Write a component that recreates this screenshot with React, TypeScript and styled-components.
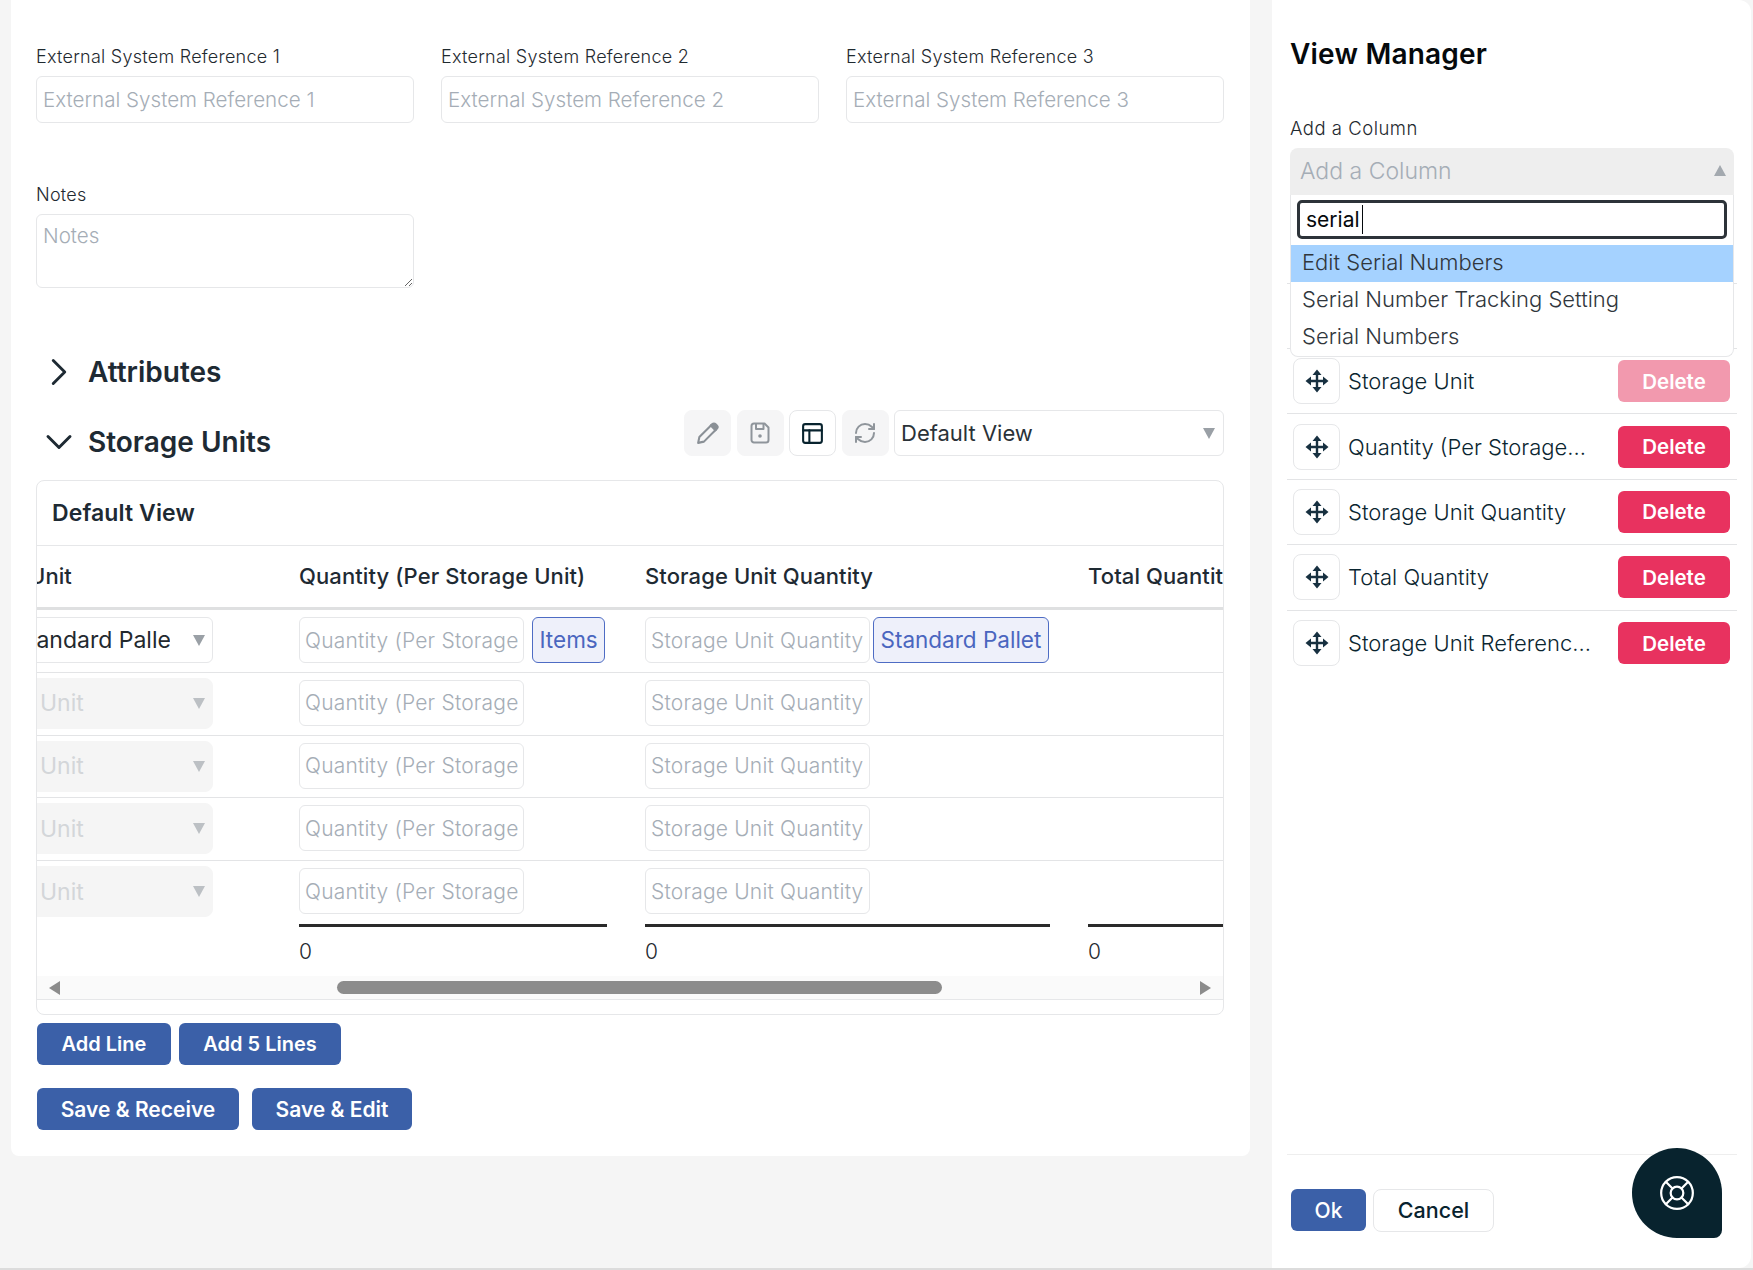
import { ChevronDown, ChevronRight, LifeBuoy, PanelsTopLeft, RefreshCw } from "lucide-react";
import styled, { createGlobalStyle } from "styled-components";

const GlobalStyle = createGlobalStyle`
  html, body {
    margin: 0;
    padding: 0;
    background: #f5f5f5;
    font-family: Inter, "Liberation Sans", sans-serif;
  }
  * { box-sizing: border-box; }
`;

const COLUMNS = "294px 346px 443px 200px";
const EMPTY_ROWS = [0, 1, 2];
const VIEW_COLUMNS = [
  "Storage Unit",
  "Quantity (Per Storage Unit)",
  "Storage Unit Quantity",
  "Total Quantity",
  "Storage Unit Reference",
];
const SEARCH_RESULTS = ["Edit Serial Numbers", "Serial Number Tracking Setting", "Serial Numbers"];

const shortName = (name: string) => (name.length > 21 ? `${name.slice(0, 21)}...` : name);

const PencilIcon = () => (
  <svg width="25" height="25" viewBox="0 0 24 24" fill="none" stroke="#8a9096" strokeWidth="2" strokeLinejoin="round">
    <path d="M3 21l1.2-5.6L15.8 3.8l4.4 4.4L8.6 19.8z" />
    <path d="M16.5 3.1c1-1 2.400-1 3.300-.1l1.200 1.200c.9.900.9 2.300-.1 3.300l-1.300 1.300-4.400-4.400z" fill="#8a9096" />
  </svg>
);

const SaveIcon = () => (
  <svg width="24" height="24" viewBox="0 0 24 24" fill="none" stroke="#8f959b" strokeWidth="2" strokeLinejoin="round">
    <path d="M6 2.500h10.500l4 4V19a2.500 2.500 0 0 1-2.500 2.500H6A2.500 2.500 0 0 1 3.500 19V5A2.500 2.500 0 0 1 6 2.500z" />
    <path d="M8 2.500V8h7.500V2.500" />
    <circle cx="12" cy="15" r="1.800" fill="#8f959b" stroke="none" />
  </svg>
);

const MoveIcon = () => (
  <svg width="24" height="24" viewBox="0 0 24 24" fill="#173040" stroke="none">
    <path d="M10.800 5h2.400v14h-2.400zM5 10.800h14v2.400H5z" />
    <path d="M12 .5l4.500 5.500h-9zM12 23.500L7.500 18h9zM.5 12L6 7.500v9zM23.500 12L18 16.500v-9z" />
  </svg>
);

const App = () => {
  return (
    <Page>
      <GlobalStyle />
      <Main>
        <FieldGrid>
          {[1, 2, 3].map((n) => (
            <Field key={n}>
              <Label>External System Reference {n}</Label>
              <TextInput placeholder={`External System Reference ${n}`} />
            </Field>
          ))}
        </FieldGrid>
        <NotesField>
          <Label>Notes</Label>
          <NotesInput placeholder="Notes" />
        </NotesField>

        <AttributesHeading>
          <ChevronBox>
            <ChevronRight size={46} strokeWidth={1.5} color="#1e2a33" />
          </ChevronBox>
          <SectionTitle>Attributes</SectionTitle>
        </AttributesHeading>

        <StorageHeading>
          <StorageTitle>
            <ChevronBox>
              <ChevronDown size={44} strokeWidth={1.6} color="#1e2a33" />
            </ChevronBox>
            <SectionTitle>Storage Units</SectionTitle>
          </StorageTitle>
          <Toolbar>
            <ToolButton>
              <PencilIcon />
            </ToolButton>
            <ToolButton>
              <SaveIcon />
            </ToolButton>
            <ToolButton $active>
              <PanelsTopLeft size={25} strokeWidth={2} color="#08232e" />
            </ToolButton>
            <ToolButton>
              <RefreshCw size={24} strokeWidth={2} color="#8f959b" />
            </ToolButton>
            <ViewSelect>
              <SelectText>Default View</SelectText>
              <Caret />
            </ViewSelect>
          </Toolbar>
        </StorageHeading>

        <TableCard>
          <TableTitle>Default View</TableTitle>
          <TableClip>
            <TableInner>
              <HeaderRow>
                <HeaderCell $inset={24}>Unit</HeaderCell>
                <HeaderCell>Quantity (Per Storage Unit)</HeaderCell>
                <HeaderCell>Storage Unit Quantity</HeaderCell>
                <HeaderCell>Total Quantity</HeaderCell>
              </HeaderRow>
              <BodyRow>
                <UnitSelect>
                  <UnitText>Standard Pallet</UnitText>
                  <Caret />
                </UnitSelect>
                <QuantityCell>
                  <CellInput $width={225} placeholder="Quantity (Per Storage Unit)" />
                  <UomTag>Items</UomTag>
                </QuantityCell>
                <QuantityCell $gap={3}>
                  <CellInput $width={225} placeholder="Storage Unit Quantity" />
                  <UomTag>Standard Pallet</UomTag>
                </QuantityCell>
                <div />
              </BodyRow>
              {EMPTY_ROWS.map((n) => (
                <BodyRow key={n}>
                  <DisabledSelect>
                    <UnitText>Unit</UnitText>
                    <Caret $muted />
                  </DisabledSelect>
                  <QuantityCell>
                    <CellInput $width={225} placeholder="Quantity (Per Storage Unit)" />
                  </QuantityCell>
                  <QuantityCell>
                    <CellInput $width={225} placeholder="Storage Unit Quantity" />
                  </QuantityCell>
                  <div />
                </BodyRow>
              ))}
              <BodyRow $last>
                <DisabledSelect>
                  <UnitText>Unit</UnitText>
                  <Caret $muted />
                </DisabledSelect>
                <QuantityCell>
                  <CellInput $width={225} placeholder="Quantity (Per Storage Unit)" />
                </QuantityCell>
                <QuantityCell>
                  <CellInput $width={225} placeholder="Storage Unit Quantity" />
                </QuantityCell>
                <div />
              </BodyRow>
              <TotalsRow>
                <div />
                <TotalCell>0</TotalCell>
                <TotalCell>0</TotalCell>
                <TotalCell>0</TotalCell>
              </TotalsRow>
            </TableInner>
          </TableClip>
          <ScrollBar>
            <ScrollArrow />
            <ScrollTrack>
              <ScrollThumb />
            </ScrollTrack>
            <ScrollArrow $right />
          </ScrollBar>
        </TableCard>

        <LineButtons>
          <PrimaryButton $width={134}>Add Line</PrimaryButton>
          <PrimaryButton $width={162}>Add 5 Lines</PrimaryButton>
        </LineButtons>
        <SaveButtons>
          <PrimaryButton $width={202} $size={21}>Save &amp; Receive</PrimaryButton>
          <PrimaryButton $width={160} $size={21}>Save &amp; Edit</PrimaryButton>
        </SaveButtons>
      </Main>

      <Side>
        <SideTitle>View Manager</SideTitle>
        <SideLabel>Add a Column</SideLabel>
        <ColumnPicker>
          <PickerBox>
            <PickerText>Add a Column</PickerText>
            <Caret $up />
          </PickerBox>
          <PickerMenu>
            <SearchBox>
              <SearchInput defaultValue="serial" readOnly />
              <Cursor />
            </SearchBox>
            {SEARCH_RESULTS.map((name, i) => (
              <MenuOption key={name} $active={i === 0}>
                {name}
              </MenuOption>
            ))}
          </PickerMenu>
        </ColumnPicker>

        <ColumnList>
          <CoveredGap $height={89} />
          <CoveredGap $height={65} />
          {VIEW_COLUMNS.map((name, i) => (
            <ColumnRow key={name}>
              <DragHandle>
                <MoveIcon />
              </DragHandle>
              <ColumnName>{shortName(name)}</ColumnName>
              <DeleteButton $faded={i === 0}>Delete</DeleteButton>
            </ColumnRow>
          ))}
        </ColumnList>

        <SideFooter>
          <OkButton>Ok</OkButton>
          <CancelButton>Cancel</CancelButton>
        </SideFooter>
        <HelpBubble>
          <LifeBuoy size={38} strokeWidth={1.4} color="#fff" />
        </HelpBubble>
      </Side>
    </Page>
  );
};
export default App;

const Page = styled.div`
  display: flex;
  align-items: flex-start;
  height: 1270px;
  padding-left: 11px;
  gap: 22px;
  background: #f5f5f5;
  border-bottom: 2px solid #dcdcdc;
`;
const Main = styled.main`
  width: 1239px;
  height: 1156px;
  padding: 45px 26px 0 25px;
  background: #fff;
  border-radius: 0 0 8px 8px;
`;
const FieldGrid = styled.div`
  display: grid;
  grid-template-columns: repeat(3, 378px);
  gap: 27px;
`;
const Field = styled.div`
  display: flex;
  flex-direction: column;
`;
const NotesField = styled(Field)`
  width: 378px;
  margin-top: 60px;
`;
const Label = styled.label`
  height: 24px;
  margin-bottom: 7px;
  font-size: 18px;
  line-height: 24px;
  font-weight: 300;
  letter-spacing: 0.25px;
  color: #1f2a30;
`;
const TextInput = styled.input`
  width: 100%;
  height: 47px;
  padding: 0 6px;
  border: 1px solid #e6e7e9;
  border-radius: 6px;
  background: #fff;
  font-family: inherit;
  font-size: 20.6px;
  font-weight: 300;
  outline: none;

  &::placeholder {
    color: #a5adb6;
    opacity: 1;
  }
`;
const NotesInput = styled.textarea`
  display: block;
  width: 100%;
  height: 74px;
  padding: 7px 6px;
  border: 1px solid #e6e7e9;
  border-radius: 6px;
  font-family: inherit;
  font-size: 20.6px;
  line-height: 28px;
  font-weight: 300;
  outline: none;

  &::placeholder {
    color: #a5adb6;
    opacity: 1;
  }
`;
const AttributesHeading = styled.div`
  display: flex;
  align-items: center;
  height: 40px;
  margin-top: 64px;
`;
const ChevronBox = styled.span`
  display: flex;
  align-items: center;
  justify-content: center;
  width: 52px;
  height: 40px;
  padding-right: 6px;
`;
const SectionTitle = styled.h2`
  margin: 0;
  font-size: 28px;
  line-height: 40px;
  font-weight: 600;
  color: #1e2a33;
`;
const StorageHeading = styled.div`
  display: flex;
  justify-content: space-between;
  height: 70px;
  margin-top: 18px;
`;
const StorageTitle = styled.div`
  display: flex;
  align-items: center;
  height: 40px;
  margin-top: 12px;
`;
const Toolbar = styled.div`
  display: flex;
  gap: 5.5px;
  height: 46px;
`;
const ToolButton = styled.button<{ $active?: boolean }>`
  display: flex;
  align-items: center;
  justify-content: center;
  width: 47px;
  height: 46px;
  padding: 0;
  border: 1px solid ${({ $active }) => ($active ? "#e6e7e9" : "#f5f5f6")};
  border-radius: 8px;
  background: ${({ $active }) => ($active ? "#fff" : "#f5f5f6")};
`;
const ViewSelect = styled.div`
  display: flex;
  align-items: center;
  width: 330px;
  height: 46px;
  padding: 0 8px 0 6px;
  border: 1px solid #e6e7e9;
  border-radius: 6px;
`;
const SelectText = styled.span`
  flex: 1;
  font-size: 22px;
  color: #2a3238;
`;
const Caret = styled.span<{ $up?: boolean; $muted?: boolean }>`
  flex: none;
  width: 0;
  height: 0;
  border-left: 6px solid transparent;
  border-right: 6px solid transparent;
  ${({ $up, $muted }) =>
    $up
      ? "border-bottom: 11px solid #a3a9af;"
      : `border-top: 11px solid ${$muted ? "#bcc0c4" : "#9aa0a6"};`}
`;
const TableCard = styled.section`
  height: 535px;
  border: 1px solid #e6e7e9;
  border-radius: 8px;
  overflow: hidden;
`;
const TableTitle = styled.h3`
  height: 65px;
  margin: 0;
  padding-left: 15px;
  border-bottom: 1px solid #e6e7e9;
  font-size: 23px;
  line-height: 64px;
  font-weight: 600;
  letter-spacing: 0.1px;
  color: #1e2a33;
`;
const TableClip = styled.div`
  height: 430px;
  overflow: hidden;
`;
const TableInner = styled.div`
  width: 1283px;
  margin-left: -32px;
`;
const HeaderRow = styled.div`
  display: grid;
  grid-template-columns: ${COLUMNS};
  height: 64px;
  border-bottom: 3px solid #dfe0e1;
`;
const HeaderCell = styled.div<{ $inset?: number }>`
  padding-left: ${({ $inset }) => $inset ?? 0}px;
  font-size: 22px;
  line-height: 60px;
  font-weight: 500;
  letter-spacing: 0.1px;
  color: #1e2a33;
  white-space: nowrap;
`;
const BodyRow = styled.div<{ $last?: boolean }>`
  display: grid;
  grid-template-columns: ${COLUMNS};
  height: 62.75px;
  padding-top: 7px;
  border-bottom: ${({ $last }) => ($last ? "none" : "1px solid #e3e4e6")};
`;
const UnitSelect = styled.div`
  display: flex;
  align-items: center;
  gap: 23px;
  width: 208px;
  height: 46px;
  padding: 0 7px 0 8px;
  border: 1px solid #e6e7e9;
  border-radius: 6px;
  color: #23292e;
`;
const DisabledSelect = styled(UnitSelect)`
  height: 51px;
  margin-top: -2px;
  padding-left: 34px;
  border-color: #f5f5f5;
  border-radius: 8px;
  background: #f5f5f5;
  color: #d3d6d9;
`;
const UnitText = styled.span`
  flex: 1;
  min-width: 0;
  overflow: hidden;
  font-size: 23px;
  white-space: nowrap;
`;
const QuantityCell = styled.div<{ $gap?: number }>`
  display: flex;
  gap: ${({ $gap }) => $gap ?? 8}px;
`;
const CellInput = styled.input<{ $width: number }>`
  flex: none;
  width: ${({ $width }) => $width}px;
  height: 46px;
  padding: 0 5px;
  border: 1px solid #e6e7e9;
  border-radius: 6px;
  background: #fff;
  font-family: inherit;
  font-size: 21px;
  font-weight: 300;
  letter-spacing: 0.2px;
  outline: none;

  &::placeholder {
    color: #a5adb6;
    opacity: 1;
  }
`;
const UomTag = styled.span`
  flex: none;
  height: 46px;
  padding: 0 6.5px;
  border: 1px solid #4e6cc4;
  border-radius: 6px;
  background: #eef0fa;
  font-size: 22.5px;
  line-height: 43px;
  color: #4a66bf;
`;
const TotalsRow = styled.div`
  display: grid;
  grid-template-columns: ${COLUMNS};
`;
const TotalCell = styled.div`
  margin-right: 38px;
  padding-top: 11px;
  border-top: 3px solid #2a2a2a;
  font-size: 21px;
  line-height: 28px;
  font-weight: 300;
  color: #1f2a30;
`;
const ScrollBar = styled.div`
  display: flex;
  align-items: center;
  height: 24px;
  padding: 0 12px;
  background: #fafafa;
  border-bottom: 1px solid #e6e7e9;
`;
const ScrollArrow = styled.span<{ $right?: boolean }>`
  flex: none;
  width: 0;
  height: 0;
  border-top: 7px solid transparent;
  border-bottom: 7px solid transparent;
  ${({ $right }) => ($right ? "border-left: 11px solid #8c8c8c;" : "border-right: 11px solid #8c8c8c;")}
`;
const ScrollTrack = styled.div`
  flex: 1;
  padding-left: 277px;
`;
const ScrollThumb = styled.div`
  width: 605px;
  height: 13px;
  border-radius: 7px;
  background: #8c8c8c;
`;
const LineButtons = styled.div`
  display: flex;
  gap: 8px;
  margin: 8px 0 0 1px;
`;
const SaveButtons = styled.div`
  display: flex;
  gap: 13px;
  margin: 23px 0 0 1px;
`;
const PrimaryButton = styled.button<{ $width: number; $size?: number }>`
  width: ${({ $width }) => $width}px;
  height: 42px;
  padding: 0;
  border: none;
  border-radius: 6px;
  background: #3b60a8;
  font-family: inherit;
  font-size: ${({ $size }) => $size ?? 20}px;
  font-weight: 600;
  color: #fff;
`;
const Side = styled.aside`
  position: relative;
  display: flex;
  flex-direction: column;
  width: 479px;
  height: 1268px;
  padding-top: 36px;
  background: #fff;
  border-radius: 0 12px 12px 0;
`;
const SideTitle = styled.h1`
  height: 36px;
  margin: 0 0 45px 18px;
  font-size: 28px;
  line-height: 36px;
  font-weight: 600;
  letter-spacing: 0.2px;
  color: #05090c;
`;
const SideLabel = styled.label`
  height: 24px;
  margin: 0 0 7px 18px;
  font-size: 18.5px;
  line-height: 23px;
  font-weight: 300;
  letter-spacing: 0.5px;
  color: #1f2a30;
`;
const ColumnPicker = styled.div`
  position: relative;
  margin: 0 17px 0 18px;
`;
const PickerBox = styled.div`
  display: flex;
  align-items: center;
  height: 47px;
  padding: 0 8px 2px 10px;
  background: #eeeeee;
  border-radius: 8px 8px 0 0;
`;
const PickerText = styled.span`
  flex: 1;
  font-size: 23px;
  font-weight: 300;
  color: #a5adb6;
`;
const PickerMenu = styled.div`
  position: absolute;
  z-index: 2;
  top: 100%;
  left: 0;
  right: 0;
  height: 162px;
  padding-top: 5px;
  background: #fff;
  border: 1px solid #e6e7e9;
  border-top: none;
  border-radius: 0 0 8px 8px;
`;
const SearchBox = styled.div`
  position: relative;
  height: 39px;
  margin: 0 6px 6px;
`;
const SearchInput = styled.input`
  display: block;
  width: 100%;
  height: 100%;
  padding: 0 6px;
  border: 3px solid #2d3339;
  border-radius: 5px;
  background: #fff;
  font-family: inherit;
  font-size: 21px;
  color: #05090c;
  outline: none;
`;
const Cursor = styled.span`
  position: absolute;
  top: 5px;
  left: 65px;
  width: 1px;
  height: 29px;
  background: #05090c;
`;
const MenuOption = styled.div<{ $active?: boolean }>`
  height: 37px;
  padding-left: 11px;
  background: ${({ $active }) => ($active ? "#a5d2ff" : "transparent")};
  font-size: 22px;
  font-weight: 300;
  line-height: 35px;
  color: #30363c;
`;
const ColumnList = styled.div`
  width: 450px;
  margin-left: 15px;
`;
const CoveredGap = styled.div<{ $height: number }>`
  height: ${({ $height }) => $height}px;
  border-bottom: 1px solid #e3e4e6;
`;
const ColumnRow = styled.div`
  display: flex;
  align-items: center;
  gap: 8px;
  height: 65.4px;
  padding: 0 7px 0 6px;
  border-bottom: 1px solid #e3e4e6;

  &:last-child {
    border-bottom: none;
  }
`;
const DragHandle = styled.span`
  display: flex;
  flex: none;
  align-items: center;
  justify-content: center;
  width: 47px;
  height: 46px;
  border: 1px solid #e6e7e9;
  border-radius: 8px;
`;
const ColumnName = styled.span`
  font-size: 22px;
  font-weight: 300;
  color: #0a2530;
  white-space: nowrap;
`;
const DeleteButton = styled.button<{ $faded?: boolean }>`
  width: 112px;
  height: 42px;
  margin-left: auto;
  padding: 0;
  border: none;
  border-radius: 6px;
  background: ${({ $faded }) => ($faded ? "#f299ae" : "#e8325f")};
  font-family: inherit;
  font-size: 20.5px;
  font-weight: 600;
  color: #fff;
`;
const SideFooter = styled.div`
  display: flex;
  align-items: flex-start;
  gap: 7px;
  width: 450px;
  height: 114px;
  margin: auto 0 0 15px;
  padding: 34px 0 0 4px;
  border-top: 1px solid #eeeeee;
`;
const OkButton = styled.button`
  width: 75px;
  height: 42px;
  padding: 0;
  border: none;
  border-radius: 6px;
  background: #3b60a8;
  font-family: inherit;
  font-size: 21px;
  font-weight: 500;
  color: #fff;
`;
const CancelButton = styled.button`
  width: 121px;
  height: 43px;
  padding: 0 0 2px;
  border: 1px solid #e6e7e9;
  border-radius: 8px;
  background: #fff;
  font-family: inherit;
  font-size: 21.5px;
  font-weight: 500;
  color: #08232e;
`;
const HelpBubble = styled.div`
  position: absolute;
  right: 29px;
  bottom: 30px;
  display: flex;
  align-items: center;
  justify-content: center;
  width: 90px;
  height: 90px;
  background: #08232e;
  border-radius: 50% 50% 8px 50%;
`;
